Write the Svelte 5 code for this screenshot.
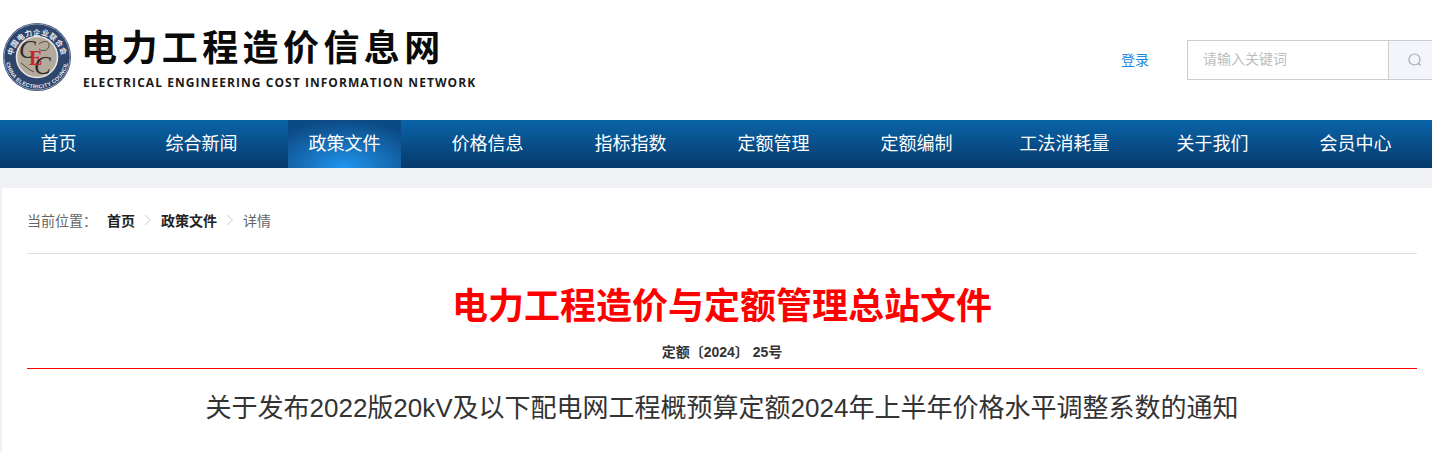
<script>
  const navItems = ['首页', '综合新闻', '政策文件', '价格信息', '指标指数', '定额管理', '定额编制', '工法消耗量', '关于我们', '会员中心'];
  const activeNav = '政策文件';
</script>

<div class="page">
  <!-- header: seal, site name, login, search -->
  <header class="header">
    <div class="brand">
      <svg class="seal" width="70" height="70" viewBox="0 0 70 70" aria-hidden="true">
        <defs>
          <path id="seal-top" d="M10.5 37a24.5 24.5 0 0 1 49 0" />
          <path id="seal-bottom" d="M3.5 35a31.5 31.5 0 0 0 63 0" />
        </defs>
        <circle cx="35" cy="35" r="34" fill="#2f466c" />
        <circle cx="35" cy="35" r="33" fill="none" stroke="#8c9bb5" stroke-width="1" />
        <circle cx="35" cy="35" r="20.5" fill="#b4aa9c" stroke="#e6e6e6" stroke-width="1.6" />
        <text class="seal-cn"><textPath href="#seal-top" startOffset="50%" text-anchor="middle">中国电力企业联合会</textPath></text>
        <text class="seal-en"><textPath href="#seal-bottom" startOffset="50%" text-anchor="middle">CHINA ELECTRICITY COUNCIL</textPath></text>
        <text class="seal-c" x="17" y="36">C</text>
        <text class="seal-c" x="32" y="52">C</text>
        <text class="seal-e" x="27" y="43">E</text>
        <path d="M37 22c5-4 11-3 10 2s-7 6-10 3M19 41c4 3 8 7 13 9" fill="none" stroke="#4a4038" stroke-width=".9" />
      </svg>
      <div class="brand-text">
        <div class="brand-cn">电力工程造价信息网</div>
        <div class="brand-en">ELECTRICAL ENGINEERING COST INFORMATION NETWORK</div>
      </div>
    </div>
    <div class="tools">
      <a class="login" href="#login">登录</a>
      <div class="search">
        <input class="search-input" type="text" placeholder="请输入关键词" />
        <button class="search-btn" aria-label="搜索">
          <svg width="16" height="16" viewBox="0 0 16 16" fill="none" stroke="#a4a9b2" stroke-width="1.2">
            <circle cx="7.5" cy="7.5" r="5.5" />
            <path d="M11.5 11.5l2 2" />
          </svg>
        </button>
      </div>
    </div>
  </header>

  <nav class="nav">
    {#each navItems as item}
      <a class="nav-item" class:active={item === activeNav} class:wide={item.length > 4} href="#nav">{item}</a>
    {/each}
  </nav>

  <main class="content">
    <div class="crumbs">
      <span class="crumb-label">当前位置：</span>
      <a class="crumb-link" href="#home">首页</a>
      <svg class="crumb-sep" width="8" height="12" viewBox="0 0 8 12" fill="none" stroke="#c8ccd4" stroke-width="1"><path d="M1 1l5.5 5L1 11" /></svg>
      <a class="crumb-link" href="#policy">政策文件</a>
      <svg class="crumb-sep" width="8" height="12" viewBox="0 0 8 12" fill="none" stroke="#c8ccd4" stroke-width="1"><path d="M1 1l5.5 5L1 11" /></svg>
      <span class="crumb-now">详情</span>
    </div>

    <article class="doc">
      <h1 class="doc-org">电力工程造价与定额管理总站文件</h1>
      <p class="doc-no">定额〔2024〕 25号</p>
      <h2 class="doc-title">关于发布2022版20kV及以下配电网工程概预算定额2024年上半年价格水平调整系数的通知</h2>
    </article>
  </main>
</div>

<style>
  :global(body) {
    margin: 0;
    background: #eff1f5;
    overflow: hidden;
  }

  .page {
    height: 452px;
    overflow: hidden;
    font-family: "Liberation Sans", "Noto Sans CJK SC", sans-serif;
  }

  /* header */
  .header {
    height: 120px;
    background: #fff;
    display: flex;
    justify-content: space-between;
    align-items: center;
  }

  .brand {
    display: flex;
    align-items: center;
    gap: 11px;
    padding-left: 2px;
    margin-top: -6px;
  }

  .seal-cn {
    font: bold 7.4px "Noto Sans CJK SC", sans-serif;
    fill: #e8ebf0;
    letter-spacing: .4px;
  }

  .seal-en {
    font: bold 5.4px "Liberation Sans", sans-serif;
    fill: #e8ebf0;
    letter-spacing: .3px;
  }

  .seal-c {
    font: italic 25px "Liberation Serif", serif;
    fill: #2e2a26;
  }

  .seal-e {
    font: bold 20px "Liberation Serif", serif;
    fill: #c8242c;
  }

  .brand-cn {
    font: bold 36px/42px "Noto Sans CJK SC", sans-serif;
    letter-spacing: 4.4px;
    color: #0a0a0a;
    margin-left: -2px;
  }

  .brand-en {
    font: bold 12px/16px "Open Sans", sans-serif;
    letter-spacing: 1.06px;
    color: #1a1a1a;
    margin-top: 9px;
  }

  .tools {
    display: flex;
    align-items: center;
  }

  .login {
    font-size: 14px;
    color: #1a87e0;
    text-decoration: none;
    margin: -2px 38px 0 0;
  }

  .search {
    display: flex;
    height: 40px;
    width: 245px;
    box-sizing: border-box;
    border: 1px solid #cccdd0;
    border-right: 0;
  }

  .search-input {
    flex: 1;
    min-width: 0;
    border: 0;
    outline: 0;
    padding: 0 15px 2px;
    font: 14px "Liberation Sans", "Noto Sans CJK SC", sans-serif;
    border-right: 1px solid #cccdd0;
  }

  .search-input::placeholder {
    color: #bdbdbd;
  }

  .search-btn {
    width: 43px;
    border: 0;
    padding: 0 0 0 18px;
    background: #f4f5fa;
    display: flex;
    align-items: center;
    justify-content: flex-start;
  }

  /* main nav */
  .nav {
    height: 48px;
    display: flex;
    gap: 30px;
    padding-left: 2px;
    background: linear-gradient(#0a64a8, #06396b);
  }

  .nav-item {
    width: 113px;
    flex: none;
    text-align: center;
    font-size: 18px;
    line-height: 48px;
    color: #fff;
    text-decoration: none;
  }

  .nav-item.wide {
    width: 123px;
  }

  .nav-item.active {
    background: radial-gradient(ellipse 75% 100% at 50% 100%, #2095f0 0%, #176fb8 50%, #0c4a85 100%);
  }

  /* content card */
  .content {
    margin: 20px 0 0 2px;
    background: #fff;
    padding: 0 15px 0 25px;
    height: 264px;
  }

  .crumbs {
    height: 66px;
    padding-bottom: 2px;
    box-sizing: border-box;
    display: flex;
    align-items: center;
    font-size: 14px;
    color: #666;
    border-bottom: 1px solid #dcdde0;
  }

  .crumb-label {
    margin-right: 10px;
  }

  .crumb-link {
    color: #222;
    font-weight: bold;
    text-decoration: none;
  }

  .crumb-sep {
    margin: 0 9px;
  }

  .crumb-now {
    color: #666;
  }

  .doc {
    text-align: center;
  }

  .doc-org {
    margin: 25px 0 0;
    font: bold 36px/48px "Noto Sans CJK SC", sans-serif;
    color: #f00;
  }

  .doc-no {
    margin: 16px 0 0;
    padding-bottom: 7px;
    font-size: 14px;
    line-height: 18px;
    font-weight: bold;
    color: #333;
    border-bottom: 1px solid #f00;
  }

  .doc-title {
    margin: 20px 0 0;
    font-size: 26px;
    line-height: 38px;
    font-weight: normal;
    color: #333;
    white-space: nowrap;
  }
</style>
